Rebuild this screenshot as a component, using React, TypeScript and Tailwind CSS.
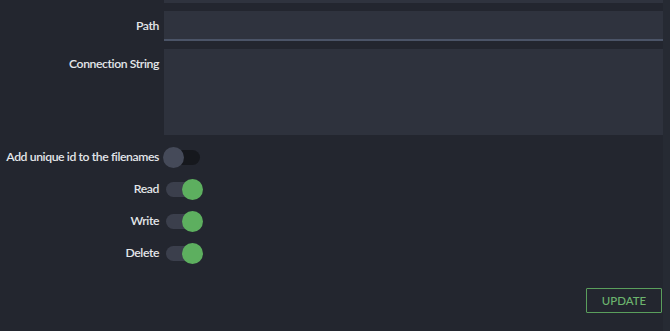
import React from "react";

function Toggle({ on }: { on: boolean }) {
  return (
    <div className="relative w-[40px] h-[21px] -ml-[1px]">
      <div
        className={
          "absolute left-[3px] top-[3px] w-[34px] h-[15px] rounded-full " +
          (on ? "bg-[#3b3f4c]" : "bg-[#16181d]")
        }
      />
      <div
        className={
          "absolute top-0 w-[21px] h-[21px] rounded-full " +
          (on ? "left-[19px] bg-[#5daf5f]" : "left-0 bg-[#454a59]")
        }
      />
    </div>
  );
}

const labelCls =
  "flex justify-end whitespace-nowrap pr-[5px] text-[12.2px] tracking-[-0.4px] font-semibold text-[#e4e6ea]";

function ToggleRow({ label, on }: { label: string; on: boolean }) {
  return (
    <div className="grid grid-cols-[164px_1fr] items-center h-[32px]">
      <div className={labelCls}>{label}</div>
      <Toggle on={on} />
    </div>
  );
}

export default function App() {
  return (
    <div
      className="w-[670px] h-[331px] bg-[#23262f] flex overflow-hidden"
      style={{ fontFamily: "'Lato', 'Noto Sans', sans-serif" }}
    >
      <div className="w-[663px] flex flex-col">
        <div className="grid grid-cols-[164px_1fr]">
          <div />
          <div className="h-[3px] bg-[#2f333e]" />
        </div>
        <div className="grid grid-cols-[164px_1fr] items-center mt-[8px]">
          <div className={labelCls}>Path</div>
          <div className="h-[30px] bg-[#2f333e] border-b-2 border-[#4b5467]" />
        </div>
        <div className="grid grid-cols-[164px_1fr] mt-[8px]">
          <div className={labelCls + " pt-[6px]"}>Connection String</div>
          <div className="h-[86px] bg-[#2e323d]" />
        </div>
        <div className="mt-[6px] flex flex-col">
          <ToggleRow label="Add unique id to the filenames" on={false} />
          <ToggleRow label="Read" on={true} />
          <ToggleRow label="Write" on={true} />
          <ToggleRow label="Delete" on={true} />
        </div>
        <div className="flex justify-end mt-[19px] pr-[1px]">
          <button className="w-[76px] h-[25px] border border-[#5a9e5c] text-[#6cb46e] text-[11.5px] font-medium rounded-[1px]">
            UPDATE
          </button>
        </div>
      </div>
      <div className="w-[7px] bg-[#262a33]" />
    </div>
  );
}
